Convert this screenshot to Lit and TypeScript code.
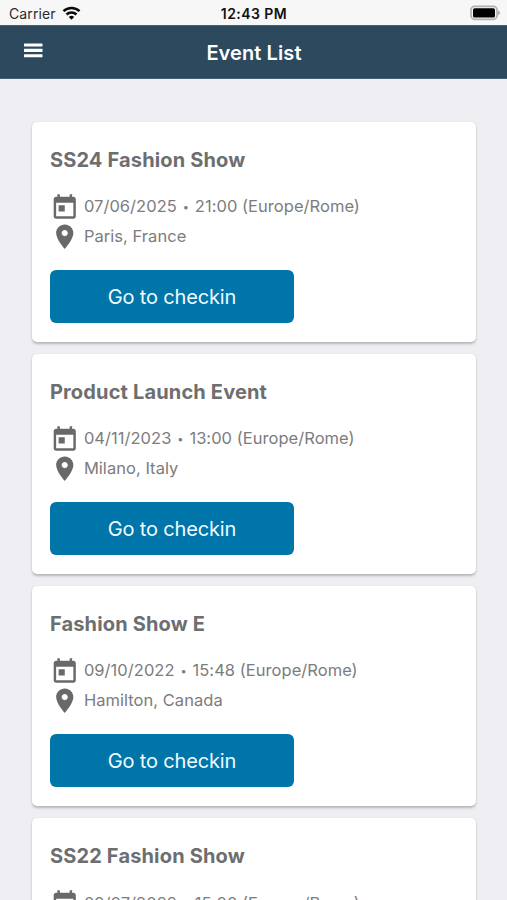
import { LitElement, html, css, svg } from "lit";
import { customElement, property } from "lit/decorators.js";

interface EventItem {
  title: string;
  date: string;
  time: string;
  place: string;
}

const EVENTS: EventItem[] = [
  { title: "SS24 Fashion Show", date: "07/06/2025", time: "21:00 (Europe/Rome)", place: "Paris, France" },
  { title: "Product Launch Event", date: "04/11/2023", time: "13:00 (Europe/Rome)", place: "Milano, Italy" },
  { title: "Fashion Show E", date: "09/10/2022", time: "15:48 (Europe/Rome)", place: "Hamilton, Canada" },
  { title: "SS22 Fashion Show", date: "09/07/2022", time: "15:00 (Europe/Rome)", place: "Milano, Italy" },
];

const calendarPath = svg`<path d="M19 3h-1V1h-2v2H8V1H6v2H5c-1.11 0-1.99.9-1.99 2L3 19c0 1.1.89 2 2 2h14c1.1 0 2-.9 2-2V5c0-1.1-.9-2-2-2zm0 16H5V8h14v11zM7 10h5v5H7z"/>`;
const pinPath = svg`<path d="M12 2C8.13 2 5 5.13 5 9c0 5.25 7 13 7 13s7-7.75 7-13c0-3.87-3.13-7-7-7zm0 9.5c-1.38 0-2.5-1.12-2.5-2.5s1.12-2.5 2.5-2.5 2.5 1.12 2.5 2.5-1.12 2.5-2.5 2.5z"/>`;

@customElement("status-bar")
export class StatusBar extends LitElement {
  static styles = css`
    :host {
      display: grid;
      grid-template-columns: 1fr auto 1fr;
      align-items: center;
      height: 25px;
      box-sizing: border-box;
      padding: 2px 6px 0 9px;
      background: #f7f7f7;
      color: #111;
      font-size: 14px;
      line-height: 20px;
    }
    .carrier { display: flex; align-items: center; gap: 6px; color: #2b2b2b; }
    .name { letter-spacing: 0.1px; }
    .time { font-weight: 600; letter-spacing: 0.45px; font-size: 14px; margin-right: 2px; }
    .wifi { display: block; width: 19px; height: 14px; margin-top: -2px; }
    .battery { display: block; width: 31px; height: 16px; justify-self: end; margin-top: -1px; }
  `;
  render() {
    return html`
      <div class="carrier">
        <span class="name">Carrier</span>
        <svg class="wifi" viewBox="0 0 18 14" fill="none" stroke="#0a0a0a" stroke-width="2.5">
          <path d="M1 5.2a11.4 11.4 0 0 1 16 0" />
          <path d="M4 8.5a7.2 7.2 0 0 1 10 0" />
          <path d="M9 13.8 6.3 11a3.9 3.9 0 0 1 5.4 0z" fill="#0a0a0a" stroke="none" />
        </svg>
      </div>
      <span class="time">12:43 PM</span>
      <svg class="battery" viewBox="0 0 31 16">
        <rect x="1" y="1.3" width="26" height="13" rx="3.6" fill="#f7f7f7" stroke="#b1b1b1" stroke-width="1.7" />
        <rect x="3" y="3.2" width="22" height="9.3" rx="1.6" fill="#000" />
        <path d="M28 5.4c2.8 1 2.8 3.8 0 4.8z" fill="#b1b1b1" />
      </svg>
    `;
  }
}

@customElement("nav-header")
export class NavHeader extends LitElement {
  static styles = css`
    :host {
      display: grid;
      grid-template-columns: 1fr auto 1fr;
      align-items: center;
      height: 54px;
      box-sizing: border-box;
      padding: 0 24px;
      background: #2c495e;
      border-top: 1px solid #47606f;
      border-bottom: 1px solid #436073;
      color: #fff;
    }
    .menu { display: block; width: 19px; height: 15px; margin-top: -3px; }
    .title { font-size: 20px; font-weight: 600; line-height: 26px; letter-spacing: 0.1px; margin: 1px 0 0 1px; }
  `;
  render() {
    return html`
      <svg class="menu" viewBox="0 0 19 15" fill="#fff">
        <rect y="0.4" width="18.5" height="3.1" rx="0.5" />
        <rect y="5.8" width="18.5" height="3.1" rx="0.5" />
        <rect y="11.2" width="18.5" height="3.1" rx="0.5" />
      </svg>
      <span class="title">Event List</span>
    `;
  }
}

@customElement("event-card")
export class EventCard extends LitElement {
  @property({ attribute: false }) event!: EventItem;

  static styles = css`
    :host {
      display: block;
      height: 220px;
      box-sizing: border-box;
      padding: 24px 18.3px 0;
      border-radius: 5px;
      background: #fff;
      box-shadow: 0 1.5px 2.5px rgba(0, 0, 0, 0.24);
      color: #6d6e70;
    }
    .title { font-size: 20px; line-height: 28px; font-weight: 650; letter-spacing: 0.16px; white-space: nowrap; }
    .rows { margin-top: 18.8px; }
    .row { display: flex; align-items: center; height: 29.3px; white-space: nowrap; }
    .icon { flex: none; width: 29.5px; height: 29.5px; fill: #68696b; }
    .text { margin: -2.4px 0 0 4.5px; font-size: 16.5px; line-height: 20px; color: #7c7c7e; letter-spacing: 0.04px; }
    .dot { font-size: 11px; margin: 0 1.2px; vertical-align: 1px; line-height: 1; }
    .button {
      display: block;
      width: 244px;
      height: 53.5px;
      margin-top: 18.2px;
      padding: 1px 0 0;
      border: 0;
      border-radius: 6px;
      background: #0075a9;
      color: #f0faff;
      font: 400 20px/53px Inter, sans-serif;
      letter-spacing: -0.15px;
    }
  `;
  render() {
    return html`
      <div class="title">${this.event.title}</div>
      <div class="rows">
        <div class="row">
          <svg class="icon" viewBox="0 0 24 24">${calendarPath}</svg>
          <span class="text">${this.event.date} <span class="dot">•</span> ${this.event.time}</span>
        </div>
        <div class="row">
          <svg class="icon" viewBox="0 0 24 24">${pinPath}</svg>
          <span class="text">${this.event.place}</span>
        </div>
      </div>
      <button class="button">Go to checkin</button>
    `;
  }
}

@customElement("app-root")
export class AppRoot extends LitElement {
  static styles = css`
    :host {
      display: flex;
      flex-direction: column;
      height: 900px;
      overflow: hidden;
      background: #eeeef3;
      font-family: Inter, "Liberation Sans", sans-serif;
    }
    status-bar, nav-header { flex: none; }
    .list {
      flex: 1;
      min-height: 0;
      overflow: hidden;
      display: flex;
      flex-direction: column;
      gap: 12.1px;
      padding: 43px 30.8px 0 31.6px;
    }
    event-card { flex: none; }
  `;
  render() {
    return html`
      <status-bar></status-bar>
      <nav-header></nav-header>
      <div class="list">${EVENTS.map((e) => html`<event-card .event=${e}></event-card>`)}</div>
    `;
  }
}
